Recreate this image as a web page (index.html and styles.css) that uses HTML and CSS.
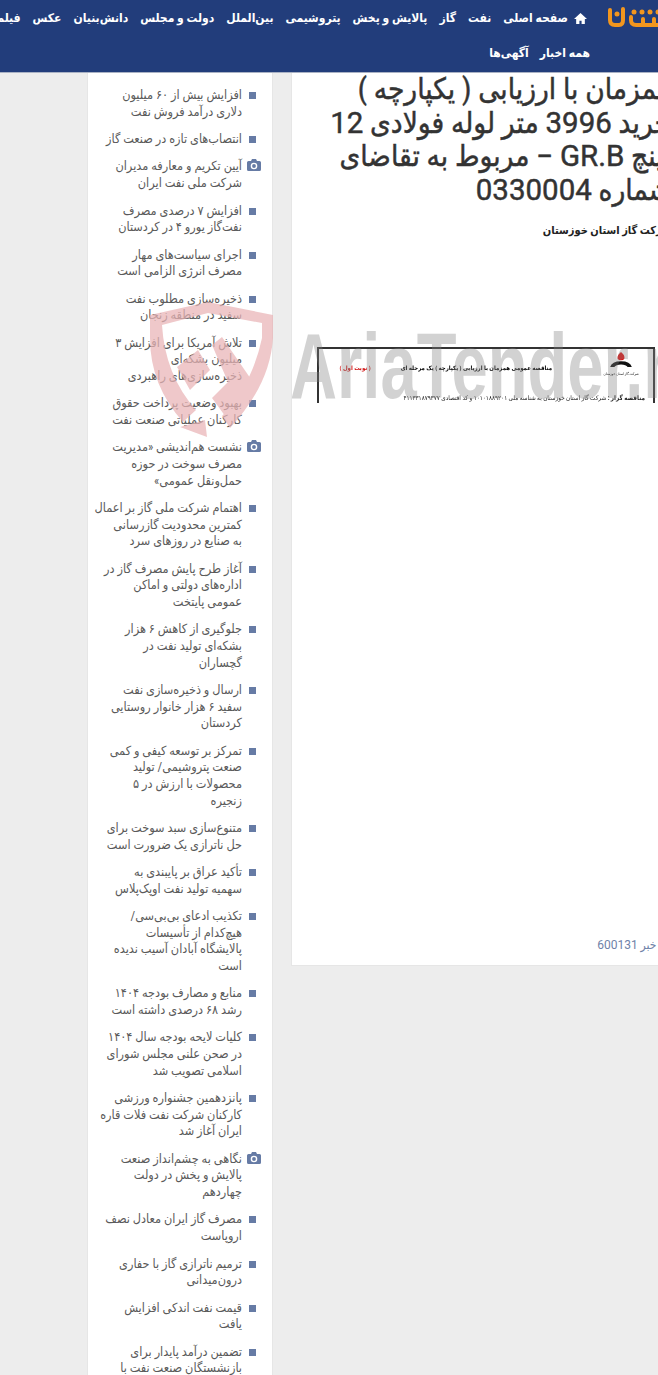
FILE: index.html
```html
<!DOCTYPE html>
<html lang="fa">
<head>
<meta charset="utf-8">
<title>مناقصه</title>
<link rel="stylesheet" href="styles.css">
</head>
<body>
<div class="page">
<header class="top">
  <nav class="nav">
    <div class="nav-row">
      <svg class="logo" viewBox="0 0 63 22"><g fill="none" stroke="#f2961e" stroke-width="4" stroke-linecap="round"><path d="M3 3v10q0 5 5 5h4q4 0 4-5V2"/><path d="M24 10v3q0 5 5 5h28q5 0 5-5v-3"/><path d="M36 12v6M47 12v6"/></g><g fill="#f2961e"><circle cx="10" cy="7" r="2.500"/><circle cx="27" cy="5" r="2.500"/><circle cx="35" cy="5" r="2.500"/><circle cx="43" cy="5" r="2.500"/><circle cx="51" cy="5" r="2.500"/><circle cx="59" cy="5" r="2.500"/></g></svg>
      <a class="home"><svg class="home-ic" viewBox="0 0 12 12"><path d="M6 1 0 6.500h2V11h3V8h2v3h3V6.500h2z" fill="#fff"/></svg>صفحه اصلی</a>
      <a>نفت</a><a>گاز</a><a>پالایش و پخش</a><a>پتروشیمی</a><a>بین‌الملل</a><a>دولت و مجلس</a><a>دانش‌بنیان</a><a>عکس</a><a>فیلم</a>
    </div>
    <div class="nav-row sub"><a>همه اخبار</a><a>آگهی‌ها</a></div>
  </nav>
</header>
<div class="cols">
  <aside class="side">
    <ul class="list">
      <li>افزایش بیش از ۶۰ میلیون<br>دلاری درآمد فروش نفت</li>
      <li>انتصاب‌های تازه در صنعت گاز</li>
      <li class="cam">آیین تکریم و معارفه مدیران<br>شرکت ملی نفت ایران<svg class="cam-ic" viewBox="0 0 14 12"><path d="M1.500 2H4l1-2h4l1 2h2.500q1.500 0 1.500 1.500v7q0 1.500-1.500 1.500h-11Q0 12 0 10.500v-7Q0 2 1.500 2z" fill="#667ba5"/><circle cx="7" cy="7" r="2.600" fill="none" stroke="#fff" stroke-width="1.400"/></svg></li>
      <li>افزایش ۷ درصدی مصرف<br>نفت‌گاز یورو ۴ در کردستان</li>
      <li>اجرای سیاست‌های مهار<br>مصرف انرژی الزامی است</li>
      <li>ذخیره‌سازی مطلوب نفت<br>سفید در منطقه زنجان</li>
      <li>تلاش آمریکا برای افزایش ۳<br>میلیون بشکه‌ای<br>ذخیره‌سازی‌های راهبردی</li>
      <li>بهبود وضعیت پرداخت حقوق<br>کارکنان عملیاتی صنعت نفت</li>
      <li class="cam">نشست هم‌اندیشی «مدیریت<br>مصرف سوخت در حوزه<br>حمل‌ونقل عمومی»<svg class="cam-ic" viewBox="0 0 14 12"><path d="M1.500 2H4l1-2h4l1 2h2.500q1.500 0 1.500 1.500v7q0 1.500-1.500 1.500h-11Q0 12 0 10.500v-7Q0 2 1.500 2z" fill="#667ba5"/><circle cx="7" cy="7" r="2.600" fill="none" stroke="#fff" stroke-width="1.400"/></svg></li>
      <li>اهتمام شرکت ملی گاز بر اعمال<br>کمترین محدودیت گازرسانی<br>به صنایع در روزهای سرد</li>
      <li>آغاز طرح پایش مصرف گاز در<br>اداره‌های دولتی و اماکن<br>عمومی پایتخت</li>
      <li>جلوگیری از کاهش ۶ هزار<br>بشکه‌ای تولید نفت در<br>گچساران</li>
      <li>ارسال و ذخیره‌سازی نفت<br>سفید ۶ هزار خانوار روستایی<br>کردستان</li>
      <li>تمرکز بر توسعه کیفی و کمی<br>صنعت پتروشیمی/ تولید<br>محصولات با ارزش در ۵<br>زنجیره</li>
      <li>متنوع‌سازی سبد سوخت برای<br>حل ناترازی یک ضرورت است</li>
      <li>تأکید عراق بر پایبندی به<br>سهمیه تولید نفت اوپک‌پلاس</li>
      <li>تکذیب ادعای بی‌بی‌سی/<br>هیچ‌کدام از تأسیسات<br>پالایشگاه آبادان آسیب ندیده<br>است</li>
      <li>منابع و مصارف بودجه ۱۴۰۴<br>رشد ۶۸ درصدی داشته است</li>
      <li>کلیات لایحه بودجه سال ۱۴۰۴<br>در صحن علنی مجلس شورای<br>اسلامی تصویب شد</li>
      <li>پانزدهمین جشنواره ورزشی<br>کارکنان شرکت نفت فلات قاره<br>ایران آغاز شد</li>
      <li class="cam">نگاهی به چشم‌انداز صنعت<br>پالایش و پخش در دولت<br>چهاردهم<svg class="cam-ic" viewBox="0 0 14 12"><path d="M1.500 2H4l1-2h4l1 2h2.500q1.500 0 1.500 1.500v7q0 1.500-1.500 1.500h-11Q0 12 0 10.500v-7Q0 2 1.500 2z" fill="#667ba5"/><circle cx="7" cy="7" r="2.600" fill="none" stroke="#fff" stroke-width="1.400"/></svg></li>
      <li>مصرف گاز ایران معادل نصف<br>اروپاست</li>
      <li>ترمیم ناترازی گاز با حفاری<br>درون‌میدانی</li>
      <li>قیمت نفت اندکی افزایش<br>یافت</li>
      <li>تضمین درآمد پایدار برای<br>بازنشستگان صنعت نفت با</li>
    </ul>
  </aside>
  <main class="card">
    <h1 class="title">همزمان با ارزیابی ( یکپارچه )<br>خرید <span class="lat">3996</span> متر لوله فولادی <span class="lat">12</span><br>اینچ <span class="lat">GR.B</span> – مربوط به تقاضای<br>شماره <span class="lat">0330004</span></h1>
    <p class="org">شرکت گاز استان خوزستان</p>
    <div class="notice">
      <div class="notice-head">
        <div class="org-mark">
          <svg class="flame" viewBox="0 0 28 24"><path d="M14 0q5 4 4 8-1 2-4 2t-4-2q-1-4 4-8z" fill="#e01010"/><path d="M1 18q2-7 13-7t13 7h-5q-2-3-8-3t-8 3z" fill="#111"/></svg>
          <span>شرکت گاز استان خوزستان</span>
        </div>
        <b class="notice-title">مناقصه عمومی همزمان با ارزیابی ( یکپارچه ) یک مرحله ای</b>
        <b class="notice-turn">( نوبت اول )</b>
      </div>
      <p class="notice-line"><b>مناقصه گزار :</b> شرکت گاز استان خوزستان به شناسه ملی ۱۰۱۰۱۸۸۹۲۰۱ و کد اقتصادی ۴۱۱۳۳۱۸۷۹۳۷۷</p>
    </div>
    <div class="wm-text">AriaTender.net</div>
    <p class="code">کد خبر <span class="lat">600131</span></p>
  </main>
</div>
<svg class="shield" viewBox="145 298 135 145"><g fill="#e9b4b6" opacity=".72"><path d="M150 315 208 302 273 315V338Q270 385 230 428L222 416Q252 385 262 338V323L208 313 162 325Q165 375 196 410L183 422Q150 385 150 338Z"/><path d="M212 345 222 337 255 385 228 420 212 398 228 382ZM177 367 198 350 210 370 190 390ZM180 427 205 420 207 437Z"/></g></svg>
</div>
</body>
</html>
```
FILE: styles.css
```css
* { box-sizing: border-box; }
html, body { margin: 0; height: 1375px; overflow: hidden; }
body { background: #ededed; font-family: Roboto, "DejaVu Sans", sans-serif; font-stretch: condensed; }
.lat { font-stretch: normal; }
.page { position: relative; width: 658px; height: 1375px; overflow: hidden; }
.top { height: 73px; width: 658px; background: #223d7b; border-bottom: 1px solid #aab2c4; position: relative; z-index: 2; overflow: hidden; }
.nav { direction: rtl; width: 720px; padding-top: 7px; }
.nav-row { display: flex; align-items: center; height: 22px; padding-right: 50px; color: #fff; font-size: 12px; font-weight: 700; white-space: nowrap; gap: 12px; }
.nav-row.sub { margin-top: 13px; padding-right: 130px; gap: 11px; }
.logo { width: 63px; height: 22px; flex: none; margin-left: 8px; }
.home { display: flex; align-items: center; gap: 6px; }
.home-ic { width: 13px; height: 13px; }
.cols { display: flex; align-items: flex-start; margin-left: 88px; gap: 20px; width: 754px; }
.side { width: 184px; flex: none; height: 1302px; background: #fff; overflow: hidden; box-shadow: 0 0 0 1px #e6e6e6; }
.list { direction: rtl; list-style: none; margin: 0; padding: 14px 30px 0 0; }
.list li { position: relative; font-size: 12.600px; line-height: 16.620px; color: #5a5a5a; margin-bottom: 10.800px; white-space: nowrap; }
.list li:not(.cam)::before { content: ""; position: absolute; right: -14px; top: 5px; width: 7px; height: 7px; background: #667ba5; }
.cam-ic { position: absolute; right: -19px; top: 1px; width: 14px; height: 12px; }
.card { position: relative; width: 390px; flex: none; height: 892px; background: #fff; direction: rtl; overflow: hidden; display: flex; flex-direction: column; box-shadow: 0 0 0 1px #e6e6e6; }
.title { margin: 0; padding-right: 11px; color: #333; font-size: 29.500px; line-height: 33.500px; font-weight: 400; -webkit-text-stroke: .45px #333; white-space: nowrap; }
.org { margin: 16px 0 0; padding-right: 10px; font-size: 11px; line-height: 16px; color: #222; font-weight: 700; white-space: nowrap; }
.notice { margin: 108px 27px 0 25px; height: 56px; border: 2px solid #333; border-bottom: 0; overflow: hidden; filter: blur(.3px); }
.notice-head { display: flex; align-items: flex-start; padding: 3px 6px 0 0; height: 38px; }
.org-mark { display: flex; flex-direction: column; align-items: center; font-size: 3.500px; width: 52px; flex: none; }
.flame { width: 24px; height: 20px; }
.notice-title { font-size: 6px; line-height: 10px; margin: 11px 43px 0 0; white-space: nowrap; }
.notice-turn { font-size: 6px; line-height: 10px; color: #d01010; margin: 11px 30px 0 0; white-space: nowrap; }
.notice-line { margin: 7px 8px 0 0; font-size: 6.300px; color: #222; white-space: nowrap; }
.wm-text { position: absolute; left: -2px; top: 243px; direction: ltr; font-family: "Liberation Sans", sans-serif; font-stretch: normal; font-weight: 700; font-size: 93px; line-height: 100px; color: rgba(130,130,130,.36); transform: scaleX(.7); transform-origin: left top; white-space: nowrap; }
.code { margin: auto 0 12px; padding-right: 12px; font-size: 12px; line-height: 16px; color: #6f82a8; white-space: nowrap; }
.shield { position: absolute; left: 145px; top: 298px; width: 135px; height: 145px; z-index: 1; pointer-events: none; }
```
